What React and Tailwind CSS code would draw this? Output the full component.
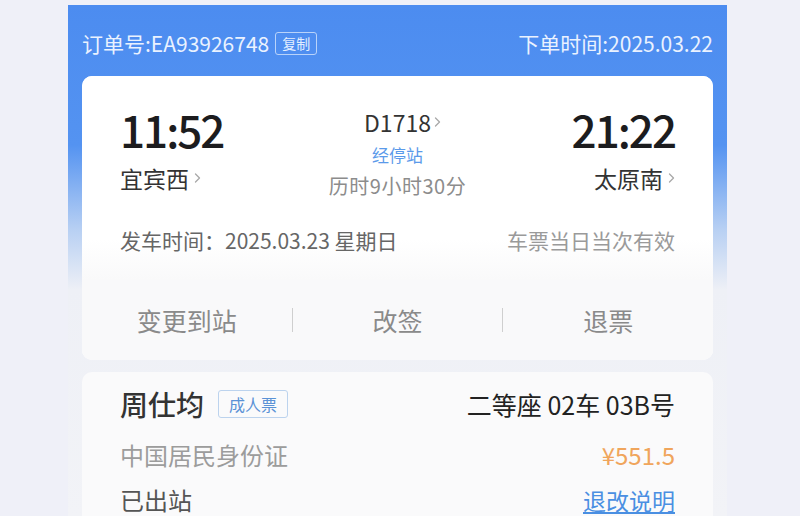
import React from "react";

function Chevron({ className = "" }) {
  return (
    <svg width="7" height="12" viewBox="0 0 7 12" className={className}>
      <polyline points="1.5,2 5.5,6 1.5,10" fill="none" stroke="#a8a8a8" strokeWidth="1.3" strokeLinecap="round" strokeLinejoin="round" />
    </svg>
  );
}

export default function App() {
  return (
    <div className="w-[800px] h-[516px] overflow-hidden bg-[#eff0f8] pl-[68px] pt-[5px] font-['Noto_Sans_CJK_SC','Noto_Sans',sans-serif]">
      <div className="w-[659px] h-[511px] bg-[linear-gradient(180deg,#4c8cf0_0px,#5493f1_140px,#b8d0f3_225px,#eef0f6_285px,#f2f3f7_511px)]">
        {/* header */}
        <div className="h-[71px] px-[14px] pt-[5px] flex items-center justify-between text-[#eaf2ff]">
          <div className="flex items-center">
            <span className="text-[21px] leading-none">订单号:EA93926748</span>
            <span className="ml-[6px] h-[23px] px-[6px] border border-[#b9d3fa] rounded-[3px] text-[14px] leading-none flex items-center text-[#e3eeff]">复制</span>
          </div>
          <span className="text-[21px] leading-none">下单时间:2025.03.22</span>
        </div>

        {/* main card */}
        <div className="mx-[14px] rounded-[10px] bg-white overflow-hidden">
          <div className="px-[38px] pt-[29px] pb-[25px] bg-[linear-gradient(180deg,#ffffff_80%,#f9f9fa_100%)]">
            <div className="flex justify-between">
              <div className="flex flex-col w-[160px]">
                <div className="h-[48px] flex items-center text-[44px] font-medium leading-none text-[#1c1c1e] tracking-[-2px]">11:52</div>
                <div className="mt-[10px] h-[30px] flex items-center text-[23px] leading-none text-[#333]">
                  宜宾西<Chevron className="ml-[5px]" />
                </div>
              </div>
              <div className="flex flex-col items-center">
                <div className="mt-[2px] h-[30px] flex items-center text-[23px] leading-none text-[#333] pl-[10px]">
                  D1718<Chevron className="ml-[3px]" />
                </div>
                <div className="mt-[6px] h-[22px] flex items-center text-[17px] leading-none text-[#5b9aea]">经停站</div>
                <div className="mt-[8px] h-[26px] flex items-center text-[20px] leading-none text-[#8c8c8c] tracking-[0.5px]">历时9小时30分</div>
              </div>
              <div className="flex flex-col items-end w-[160px]">
                <div className="h-[48px] flex items-center text-[44px] font-medium leading-none text-[#1c1c1e] tracking-[-2px]">21:22</div>
                <div className="mt-[10px] h-[30px] flex items-center text-[23px] leading-none text-[#333]">
                  太原南<Chevron className="ml-[5px]" />
                </div>
              </div>
            </div>
            <div className="mt-[26px] h-[30px] flex items-center justify-between">
              <span className="text-[21px] leading-none text-[#666]">发车时间：2025.03.23 星期日</span>
              <span className="text-[21px] leading-none text-[#9a9a9a]">车票当日当次有效</span>
            </div>
          </div>
          <div className="h-[80px] bg-[#f9f9fa] flex items-center">
            <div className="flex-1 text-center text-[25px] leading-none text-[#8a8a8a]">变更到站</div>
            <div className="w-px h-[24px] bg-[#cfcfcf]" />
            <div className="flex-1 text-center text-[25px] leading-none text-[#8a8a8a]">改签</div>
            <div className="w-px h-[24px] bg-[#cfcfcf]" />
            <div className="flex-1 text-center text-[25px] leading-none text-[#8a8a8a]">退票</div>
          </div>
        </div>

        {/* passenger card */}
        <div className="mx-[14px] mt-[12px] h-[160px] rounded-t-[10px] bg-[#fafafb] px-[38px] pt-[14px]">
          <div className="h-[36px] flex items-center justify-between">
            <div className="flex items-center">
              <span className="text-[28px] font-medium leading-none text-[#333]">周仕均</span>
              <span className="ml-[14px] h-[28px] px-[10px] border border-[#bcd3ee] rounded-[3px] flex items-center text-[16px] leading-none text-[#5a92d6]">成人票</span>
            </div>
            <span className="text-[25px] leading-none text-[#222]">二等座 02车 03B号</span>
          </div>
          <div className="mt-[18px] h-[30px] flex items-center justify-between">
            <span className="text-[24px] leading-none text-[#9c9c9c]">中国居民身份证</span>
            <span className="text-[24px] leading-none text-[#f0a55c]">¥551.5</span>
          </div>
          <div className="mt-[18px] h-[24px] flex items-center justify-between">
            <span className="text-[24px] leading-none text-[#555]">已出站</span>
            <span className="text-[23px] leading-none text-[#4a8fe2] underline underline-offset-[2px]">退改说明</span>
          </div>
        </div>
      </div>
    </div>
  );
}
